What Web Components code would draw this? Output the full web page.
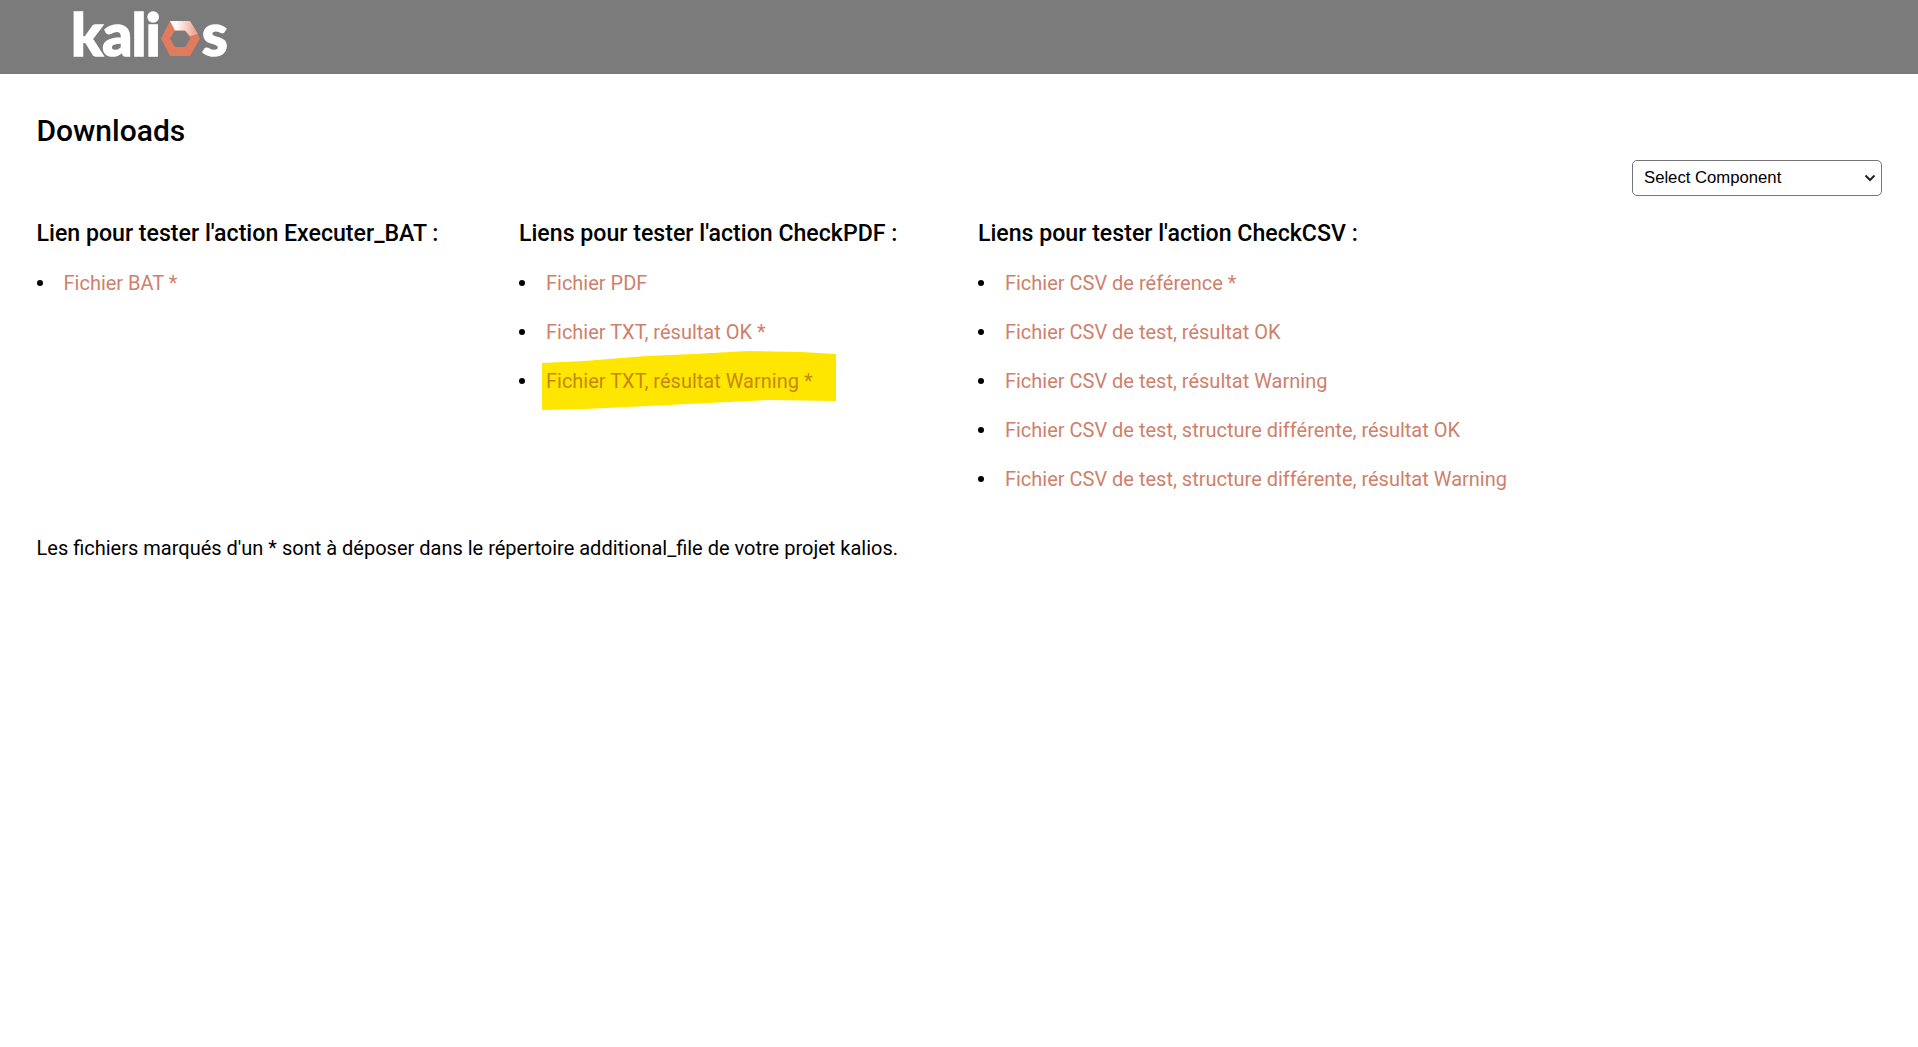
<!DOCTYPE html>
<html lang="fr">
<head>
<meta charset="utf-8">
<title>Downloads</title>
<style>
  html, body { margin: 0; background: #fff; }
  body { font-family: Roboto, "Liberation Sans", sans-serif; color: #000; }
</style>
</head>
<body>
<kalios-page>
  <kalios-header slot="header"></kalios-header>
  <h-title slot="title">Downloads</h-title>
  <component-select slot="select"></component-select>

  <link-column slot="columns" heading="Lien pour tester l'action Executer_BAT :">
    <link-item>Fichier BAT *</link-item>
  </link-column>
  <link-column slot="columns" heading="Liens pour tester l'action CheckPDF :">
    <link-item>Fichier PDF</link-item>
    <link-item>Fichier TXT, résultat OK *</link-item>
    <link-item marked>Fichier TXT, résultat Warning *</link-item>
  </link-column>
  <link-column slot="columns" heading="Liens pour tester l'action CheckCSV :">
    <link-item>Fichier CSV de référence *</link-item>
    <link-item>Fichier CSV de test, résultat OK</link-item>
    <link-item>Fichier CSV de test, résultat Warning</link-item>
    <link-item>Fichier CSV de test, structure différente, résultat OK</link-item>
    <link-item>Fichier CSV de test, structure différente, résultat Warning</link-item>
  </link-column>

  <span slot="note">Les fichiers marqués d'un * sont à déposer dans le répertoire additional_file de votre projet kalios.</span>
</kalios-page>

<script>
class KaliosPage extends HTMLElement {
    constructor() {
        super();
        this.attachShadow({ mode: 'open' });
        this.shadowRoot.innerHTML = `
          <style>
            :host { display: block; min-height: 1047px; }
            main { padding: 0 36px 0 36.500px; }
            .top { height: 75px; display: flex; align-items: flex-end; }
            .tools { display: flex; justify-content: flex-end; height: 36px; margin-top: 11px; }
            .columns { display: flex; gap: 80.500px; margin-top: 24px; }
            .note { font-size: 20px; line-height: 24px; margin-top: 33px; }
          </style>
          <slot name="header"></slot>
          <main>
            <div class="top"><slot name="title"></slot></div>
            <div class="tools"><slot name="select"></slot></div>
            <div class="columns"><slot name="columns"></slot></div>
            <div class="note"><slot name="note"></slot></div>
          </main>
        `;
    }
}

class KaliosHeader extends HTMLElement {
    constructor() {
        super();
        this.attachShadow({ mode: 'open' });
        this.shadowRoot.innerHTML = `
          <style>
            :host { display: block; height: 74px; background: #7b7b7b; }
            .logo {
              display: flex; align-items: center; height: 68px; padding-left: 71px;
              font: 900 59px/68px Lato, "Open Sans", sans-serif; color: #fff; letter-spacing: -1px;
              -webkit-text-stroke: 1.400px #fff;
            }
            svg { width: 39px; height: 35px; margin: 8px 0 0 1.500px; flex: none; }
            .s { margin-left: 1.500px; }
          </style>
          <div class="logo">
            <span>kali</span>
            <svg viewBox="0 0 39 35">
              <defs>
                <linearGradient id="shine" x1="0" x2="1" y1="0" y2="0">
                  <stop offset="0.2" stop-color="#ffffff"/>
                  <stop offset="1" stop-color="#ea9a84"/>
                </linearGradient>
              </defs>
              <path d="M9 0H29L39 17.500L29 35H9L0 17.500Z M14 9.500L9 17.500L14 26H24L29.500 17.500L24 9.500Z" fill="#e07b60" fill-rule="evenodd"/>
              <path d="M9 0H29L37 13L29 15L24 9.500H14Z" fill="url(#shine)"/>
            </svg>
            <span class="s">s</span>
          </div>
        `;
    }
}

class HTitle extends HTMLElement {
    constructor() {
        super();
        this.attachShadow({ mode: 'open' });
        this.shadowRoot.innerHTML = `
          <style>
            :host { display: block; font-size: 30px; font-weight: 500; line-height: 36px; }
          </style>
          <slot></slot>
        `;
    }
}

class ComponentSelect extends HTMLElement {
    constructor() {
        super();
        this.attachShadow({ mode: 'open' });
        this.shadowRoot.innerHTML = `
          <style>
            :host { display: block; }
            select {
              appearance: none; -webkit-appearance: none;
              width: 250px; height: 36px; padding: 0 24px 2px 11px; box-sizing: border-box;
              font: 16.700px "Liberation Sans", Arial, sans-serif; color: #000;
              background: #fff url("data:image/svg+xml,%3Csvg xmlns='http://www.w3.org/2000/svg' width='12' height='8'%3E%3Cpath d='M1.500 1.500L6 6L10.500 1.500' fill='none' stroke='%23222' stroke-width='2'/%3E%3C/svg%3E") no-repeat right 5px center;
              border: 1px solid #767676; border-radius: 5px;
            }
          </style>
          <select><option>Select Component</option></select>
        `;
    }
}

class LinkColumn extends HTMLElement {
    constructor() {
        super();
        this.attachShadow({ mode: 'open' });
        this.shadowRoot.innerHTML = `
          <style>
            :host { display: block; flex: none; }
            h3 { margin: 0 0 10px; font-size: 23.150px; font-weight: 500; line-height: 28px; }
            .list { display: flex; flex-direction: column; }
          </style>
          <h3></h3>
          <div class="list"><slot></slot></div>
        `;
        this.shadowRoot.querySelector('h3').innerText = this.getAttribute('heading');
    }
}

class LinkItem extends HTMLElement {
    constructor() {
        super();
        this.attachShadow({ mode: 'open' });
        this.shadowRoot.innerHTML = `
          <style>
            :host { display: flex; align-items: center; height: 49px; gap: 21px; position: relative; font-size: 20px; }
            .dot { width: 6px; height: 6px; border-radius: 50%; background: #000; flex: none; }
            a { color: #cf7f6b; text-decoration: none; cursor: pointer; position: relative; z-index: 1; }
            :host([marked]) a { color: #c8860f; }
            svg { position: absolute; left: 23px; top: -5px; width: 294px; height: 59px; pointer-events: none; }
          </style>
          <span class="dot"></span>
          <a><slot></slot></a>
        `;
        // trait de surligneur sur l'image d'origine
        if (this.hasAttribute('marked')) {
            this.shadowRoot.innerHTML += `
              <svg viewBox="0 0 294 59">
                <path d="M0 12L42 10L104 5L152 3L206 0L259 1L294 3V50L226 49L166 52L106 55L42 58L0 59Z" fill="#ffe600"/>
              </svg>
            `;
        }
    }
}

window.customElements.define('kalios-page', KaliosPage);
window.customElements.define('kalios-header', KaliosHeader);
window.customElements.define('h-title', HTitle);
window.customElements.define('component-select', ComponentSelect);
window.customElements.define('link-column', LinkColumn);
window.customElements.define('link-item', LinkItem);
</script>
</body>
</html>
